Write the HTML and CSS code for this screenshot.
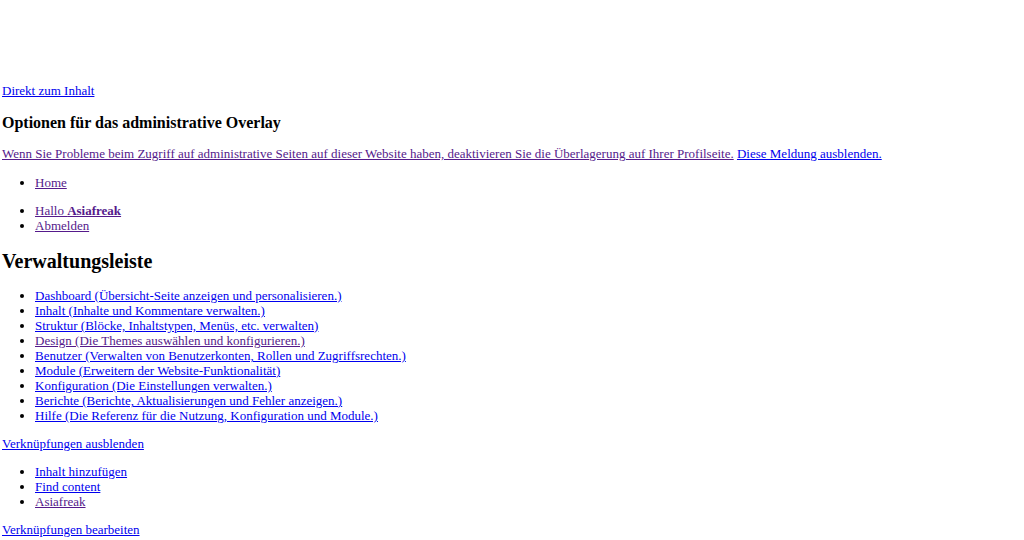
FILE: index.html
```html
<!DOCTYPE html>
<html lang="de" dir="ltr">
  <head>
    <meta charset="utf-8">
    <title>Verwaltungsleiste</title>
    <link rel="stylesheet" href="styles.css">
  </head>
  <body>

    <div class="skip">
      <a href="#main-content">Direkt zum Inhalt</a>
    </div>

    <section class="overlay-disable">
      <h2 class="title-small">Optionen für das administrative Overlay</h2>
      <p>
        <a class="visited" href="#profile">Wenn Sie Probleme beim Zugriff auf administrative Seiten auf dieser Website haben, deaktivieren Sie die Überlagerung auf Ihrer Profilseite.</a>
        <a href="#dismiss">Diese Meldung ausblenden.</a>
      </p>
    </section>

    <ul class="links">
      <li><a class="visited" href="#home">Home</a></li>
    </ul>

    <ul class="links">
      <li><a class="visited" href="#user">Hallo <b>Asiafreak</b></a></li>
      <li><a class="visited" href="#logout">Abmelden</a></li>
    </ul>

    <h2 class="title-big">Verwaltungsleiste</h2>

    <ul class="links">
      <li><a href="#dashboard">Dashboard (Übersicht-Seite anzeigen und personalisieren.)</a></li>
      <li><a href="#content">Inhalt (Inhalte und Kommentare verwalten.)</a></li>
      <li><a href="#structure">Struktur (Blöcke, Inhaltstypen, Menüs, etc. verwalten)</a></li>
      <li><a class="visited" href="#appearance">Design (Die Themes auswählen und konfigurieren.)</a></li>
      <li><a href="#people">Benutzer (Verwalten von Benutzerkonten, Rollen und Zugriffsrechten.)</a></li>
      <li><a href="#modules">Module (Erweitern der Website-Funktionalität)</a></li>
      <li><a href="#config">Konfiguration (Die Einstellungen verwalten.)</a></li>
      <li><a href="#reports">Berichte (Berichte, Aktualisierungen und Fehler anzeigen.)</a></li>
      <li><a href="#help">Hilfe (Die Referenz für die Nutzung, Konfiguration und Module.)</a></li>
    </ul>

    <p><a href="#shortcuts">Verknüpfungen ausblenden</a></p>

    <ul class="links">
      <li><a href="#add">Inhalt hinzufügen</a></li>
      <li><a href="#find">Find content</a></li>
      <li><a class="visited" href="#me">Asiafreak</a></li>
    </ul>

    <p><a href="#edit-shortcuts">Verknüpfungen bearbeiten</a></p>

  </body>
</html>
```

FILE: styles.css
```css
* { box-sizing: border-box; }
body {
  margin: 0;
  padding: 83px 2px 0 2px;
  font-family: 'Liberation Serif', 'Times New Roman', serif;
  font-size: 13px;
  line-height: 15px;
  color: #000;
  background-color: #fff;
}
a {
  color: #0000ee;
  text-decoration: underline;
}
a.visited {
  color: #551a8b;
}
.skip {
  margin: 0;
}
p {
  margin: 13px 0;
}
h2 {
  font-weight: bold;
  margin: 0;
}
.title-small {
  font-size: 16px;
  line-height: 18px;
  margin: 16px 0 14px 0;
}
.overlay-disable p {
  margin: 0 0 14px 0;
}
.links {
  margin: 13px 0;
  padding-left: 33px;
}
.title-big {
  font-size: 20px;
  line-height: 23px;
  margin: 17px 0 15px 0;
}
```
